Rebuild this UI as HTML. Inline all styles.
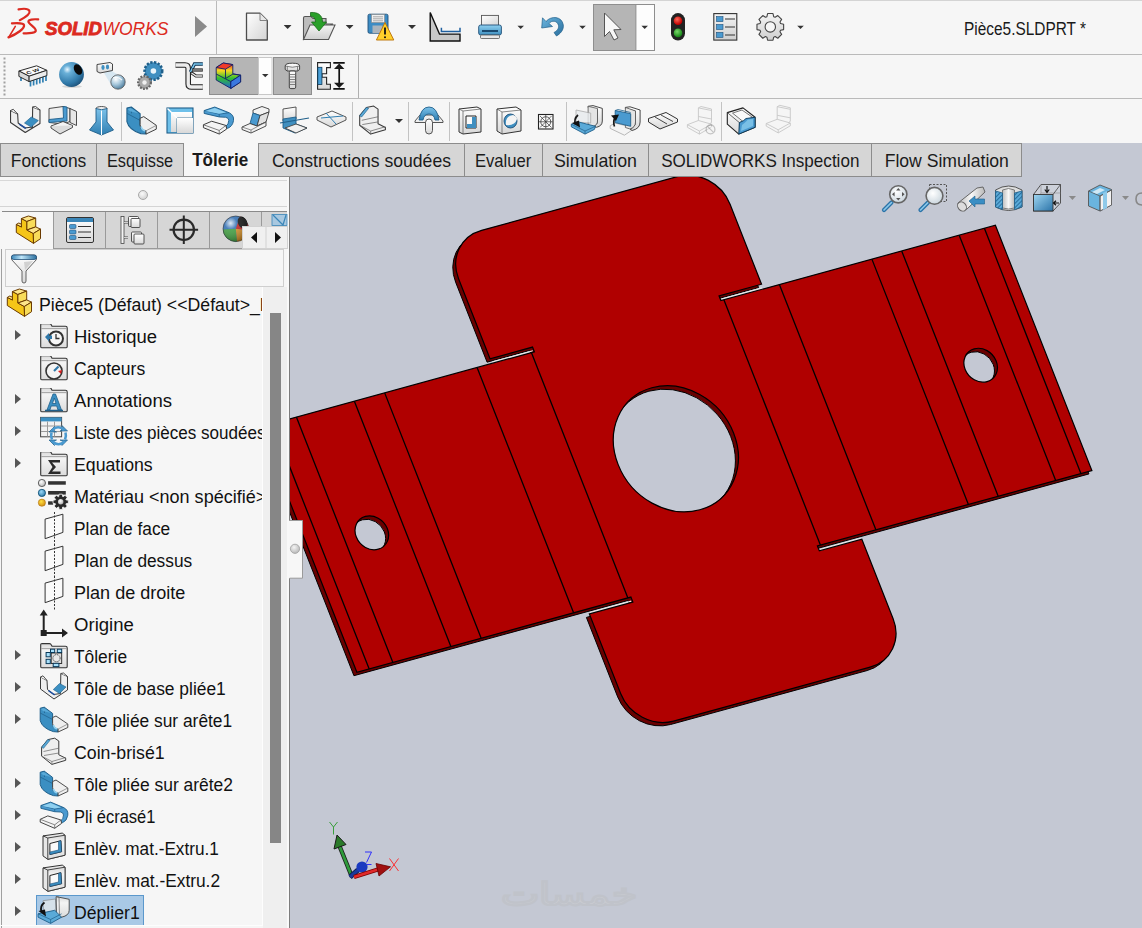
<!DOCTYPE html>
<html><head><meta charset="utf-8">
<style>
*{margin:0;padding:0;box-sizing:border-box}
html,body{width:1142px;height:928px;overflow:hidden;background:#f5f5f5;font-family:"Liberation Sans",sans-serif;color:#111}
.abs{position:absolute}
#tb{position:absolute;left:0;top:0;width:1142px;height:143px;background:#f6f6f6}
.hl{position:absolute;height:1px;background:#bababa}
.vl{position:absolute;width:1px;background:#bababa}
#tabs{position:absolute;left:0;top:143px;width:1142px;height:34px;background:#c4c8d3}
.tab{position:absolute;top:0;height:34px;background:#d6d6d6;border:1px solid #8c8c8c;border-right:none;font-size:17.8px;line-height:35px;text-align:center;color:#1b1b1b}
.tab.act{background:#f6f6f6;border:none;font-weight:bold}
#panel{position:absolute;left:0;top:177px;width:290px;height:751px;background:#f6f6f6}
#vp{position:absolute;left:290px;top:177px;width:852px;height:751px;background:#c4c8d3;overflow:hidden}
.row{position:absolute;left:0;height:32px;width:263px;font-size:18.3px;line-height:33px;white-space:nowrap;color:#111}
.exp{position:absolute;left:15px;top:10px;width:0;height:0;border-top:5.5px solid transparent;border-bottom:5.5px solid transparent;border-left:6px solid #575757}
.ti{position:absolute;left:40px;top:4px;width:28px;height:26px;overflow:visible}
.tt{position:absolute;left:74px;top:0;transform-origin:0 0}
</style></head><body>
<svg width="0" height="0" style="position:absolute">
<defs>
<linearGradient id="gFold" x1="0" y1="0" x2="0" y2="1"><stop offset="0" stop-color="#d9d9d9"/><stop offset="0.3" stop-color="#f4f4f4"/><stop offset="1" stop-color="#dcdcdc"/></linearGradient>
<linearGradient id="gBlue" x1="0" y1="0" x2="1" y2="1"><stop offset="0" stop-color="#7fc0e6"/><stop offset="1" stop-color="#2f7fb0"/></linearGradient>
<symbol id="folder" viewBox="0 0 28 26" overflow="visible"><path d="M0.7 4 V1 Q0.7 -0.4 2.1 -0.4 H9.5 Q10.8 -0.4 11.4 1 L12 2.2 H25.5 Q27.2 2.2 27.2 4 V22.4 Q27.2 23.8 25.8 23.8 H2.1 Q0.7 23.8 0.7 22.4 Z" fill="url(#gFold)" stroke="#333" stroke-width="1.1"/><path d="M1.2 4.6 H26.7" stroke="#9a9a9a" stroke-width="0.9"/></symbol>
<symbol id="i-hist" viewBox="0 0 28 26"><use href="#folder"/><circle cx="16" cy="14.5" r="7" fill="#f6f6f6" stroke="#333" stroke-width="2"/><path d="M16 10v4.5h3.5" stroke="#333" stroke-width="1.3" fill="none"/><path d="M5 13 l4 -4 v2.5 h3 v3.5 h-3 v2.5z" fill="#2f77a8"/></symbol>
<symbol id="i-capt" viewBox="0 0 28 26"><use href="#folder"/><circle cx="14" cy="15" r="8" fill="#f4f4f4" stroke="#333" stroke-width="1.6"/><path d="M14 15 l4.5 -4.5" stroke="#2f77a8" stroke-width="2.2"/><path d="M18 15 l4 -1 l-1 4z" fill="#e02020"/></symbol>
<symbol id="i-annot" viewBox="0 0 28 26"><use href="#folder"/><path d="M7 22 L13 6 h2.5 L21.5 22 h-3.5 l-1.3 -4 h-5.5 l-1.3 4z M12.5 15.5 h3.5 l-1.7 -5.5z" fill="#3b8fc2" stroke="#1f5f8a" stroke-width="0.8"/><path d="M5 22.5h18" stroke="#1f5f8a" stroke-width="1.5"/></symbol>
<symbol id="i-liste" viewBox="0 0 28 26" overflow="visible"><rect x="0.6" y="-2.6" width="21" height="19.4" fill="#f2f2f2" stroke="#444" stroke-width="1"/><rect x="0.6" y="-2.6" width="21" height="4" fill="#3b8fc2"/><path d="M1 6h20.5M1 11.5h20.5M7.5 1.5v15M14.5 1.5v15" stroke="#9a9a9a" stroke-width="1"/>
<g fill="#4a9ad0" stroke="#1f5f8a" stroke-width="0.7" stroke-linejoin="round"><path d="M9 12 L14.5 6.5 L13 10.5 L16.5 12 Z"/><path d="M27.5 12 L22 6.5 L23.5 10.5 L20 12 Z" transform="translate(0 -1)"/><path d="M27.5 20 L22 25.5 L23.5 21.5 L20 20 Z"/><path d="M9 20 L14.5 25.5 L13 21.5 L16.5 20 Z"/></g>
<path d="M12.5 10 Q18 4.5 24 10 M24.5 21.5 Q18.5 27 12.5 21.5" fill="none" stroke="#4a9ad0" stroke-width="2.6"/><path d="M11.5 12.5 Q10.5 16 12 19.5 M25.5 12.5 Q26.5 16 25 19.5" fill="none" stroke="#4a9ad0" stroke-width="2.6"/></symbol>
<symbol id="i-equ" viewBox="0 0 28 26"><use href="#folder"/><path d="M8 8 H20 V10.5 H12 L16 15 L12 19.5 H20.5 V22 H8 L12.5 15 Z" fill="#2a2a2a"/></symbol>
<symbol id="i-mat" viewBox="0 0 28 26" overflow="visible"><defs><radialGradient id="gMg" cx="0.4" cy="0.35" r="0.7"><stop offset="0" stop-color="#ffffff"/><stop offset="1" stop-color="#b0b0b0"/></radialGradient><radialGradient id="gMb" cx="0.4" cy="0.35" r="0.7"><stop offset="0" stop-color="#9ad8f8"/><stop offset="1" stop-color="#2a78a8"/></radialGradient><radialGradient id="gMy" cx="0.4" cy="0.35" r="0.7"><stop offset="0" stop-color="#ffe040"/><stop offset="1" stop-color="#d08a10"/></radialGradient></defs>
<circle cx="1.9" cy="-1" r="3.6" fill="url(#gMg)" stroke="#444" stroke-width="0.8"/><rect x="8.1" y="-2.8" width="17.7" height="3.5" fill="#333"/>
<circle cx="1.9" cy="8.9" r="3.6" fill="url(#gMb)" stroke="#0a4a70" stroke-width="0.8"/><rect x="8.1" y="7" width="17.7" height="3.6" fill="#333"/>
<circle cx="1.9" cy="18.7" r="3.6" fill="url(#gMy)" stroke="#b07010" stroke-width="0.6"/><rect x="8.1" y="17.3" width="5" height="3.4" fill="#333"/>
<path d="M18.73,12.56 L19.15,10.16 L22.25,10.16 L22.67,12.56 L23.01,12.70 L25.01,11.30 L27.20,13.49 L25.80,15.49 L25.94,15.83 L28.34,16.25 L28.34,19.35 L25.94,19.77 L25.80,20.11 L27.20,22.11 L25.01,24.30 L23.01,22.90 L22.67,23.04 L22.25,25.44 L19.15,25.44 L18.73,23.04 L18.39,22.90 L16.39,24.30 L14.20,22.11 L15.60,20.11 L15.46,19.77 L13.06,19.35 L13.06,16.25 L15.46,15.83 L15.60,15.49 L14.20,13.49 L16.39,11.30 L18.39,12.70Z" fill="#2a2a2a" stroke="#f6f6f6" stroke-width="0.8"/><circle cx="20.7" cy="17.8" r="2.7" fill="url(#gMg)"/></symbol>
<symbol id="i-plan" viewBox="0 0 28 26" overflow="visible"><path d="M5.1 3.1 L22.9 -1.8 V16.4 L5.1 22.7 Z" fill="#fafafa" stroke="#333" stroke-width="1"/><path d="M14.5 -4 V30" stroke="#333" stroke-width="1" stroke-dasharray="2 1.5"/></symbol>
<symbol id="i-orig" viewBox="0 0 28 26" overflow="visible"><path d="M3.7 2 V21 H23" fill="none" stroke="#222" stroke-width="2"/><path d="M-0.3 3.5 L3.7 -2.6 L7.7 3.5Z M22 16.5 L28 21 L22 25.5Z" fill="#222"/><rect x="0.7" y="18" width="6" height="6" fill="#222"/></symbol>
<symbol id="i-tole" viewBox="0 0 28 26" overflow="visible"><use href="#folder"/><rect x="11.2" y="9" width="10.5" height="10.5" fill="#e0e0e0" stroke="#222" stroke-width="0.9"/><circle cx="16.5" cy="14.2" r="3.6" fill="#e8e8e8" stroke="#333" stroke-width="0.9" stroke-dasharray="1.3 0.8"/><g fill="#a8e0fa" stroke="#0a3a5a" stroke-width="1"><rect x="10.5" y="5.2" width="4.2" height="3.3"/><rect x="17.3" y="5.2" width="4.4" height="3.3"/><rect x="6.1" y="8.5" width="4.2" height="4.3"/><rect x="6.1" y="15.3" width="4.2" height="4.3"/><rect x="13.2" y="19.3" width="5.7" height="3.3"/></g></symbol>
<symbol id="i-base" viewBox="0 0 28 26" overflow="visible"><path d="M0.5 1 L7 4.5 L7.5 13.5 L13.5 18.5 L20.5 17.5 L20.8 -2.5 L27.5 0.5 L27.5 14 L14 23 L0.5 13 Z" fill="#efefef" stroke="#3a3a3a" stroke-width="1" stroke-linejoin="round"/><path d="M0.5 1 L3 -0.2 L7 4.5 M20.8 -2.5 L23.5 -3 L27.5 0.5" fill="#f8f8f8" stroke="#3a3a3a" stroke-width="0.9"/><path d="M13.3 13.5 L19.5 7.5 L26 11 L19.5 17.5 Z" fill="#3b8fc2" stroke="#1f5f8a" stroke-width="0.6"/><path d="M8.5 14.6 L14.7 18.8" stroke="#1f4fa0" stroke-width="1.4"/></symbol>
<symbol id="i-arete" viewBox="0 0 28 26" overflow="visible"><path d="M0.2 0.2 L4.3 -0.8 L12.6 5.4 V15.5 Q12.6 19.5 16 20.5 L18.1 21 V24 L13.3 23.6 Q2 20 0.2 12.5 Z" fill="#3b8fc2" stroke="#1f5f8a" stroke-width="1" stroke-linejoin="round"/><path d="M0.2 5 L12.6 11.5 M4.3 -0.8 L4.5 5" stroke="#1f5f8a" stroke-width="0.7" fill="none"/><path d="M1 1 L4 0 L11 5 L3 3Z" fill="#5aaad8"/><path d="M12.6 9.5 L16 8 L27.8 16 V19.5 L18.1 24 V21 L16 20.5 Q12.6 19.5 12.6 15.5 Z" fill="#efefef" stroke="#3a3a3a" stroke-width="0.9" stroke-linejoin="round"/><path d="M18.1 21 L27.8 16" stroke="#777" stroke-width="0.7"/><path d="M13.5 17 Q14 20.5 17.5 21" fill="none" stroke="#8fd0f0" stroke-width="1.6"/></symbol>
<symbol id="i-coin" viewBox="0 0 28 26" overflow="visible"><path d="M1.6 7.2 L7.8 -0.4 L14.7 -1.8 L18.8 1 V14.8 L25.7 18.2 V20.3 L11.9 24.4 L1.6 16.1 Z" fill="#efefef" stroke="#3a3a3a" stroke-width="1" stroke-linejoin="round"/><path d="M1.6 7.2 L7.8 -0.4 L10 0.3 L3.5 8.3 Z" fill="#5aaad8" stroke="#1f5f8a" stroke-width="0.6"/><path d="M3.5 11.5 L18.8 8.2 M4 15.5 L18.8 13 M11.9 21.5 L25.7 17.5 M11.9 21.5 V24.4 M1.6 16.1 L11.9 21.5" fill="none" stroke="#666" stroke-width="0.7"/></symbol>
<symbol id="i-ecrase" viewBox="0 0 28 26" overflow="visible"><path d="M0.9 1.5 L10.6 -1.9 L23.7 3.6 Q28.5 6 27.8 11.2 Q27 17 22.3 18.8 L20.5 17 Q23.5 15 23.5 11 Q23.5 8.5 20.5 8 L14.7 7.7 L0.9 4.3 Z" fill="#4a9ad0" stroke="#1f5f8a" stroke-width="0.9" stroke-linejoin="round"/><path d="M0.9 1.5 L14.7 5 L23.7 3.6 M14.7 5 V7.7" fill="none" stroke="#1f5f8a" stroke-width="0.7"/><path d="M2 2 L10.6 -1 L21 3.5 L14.5 4.5Z" fill="#8fd0f0"/><path d="M0.2 15.3 L7.8 11.9 L20.9 16 L21.6 19.4 L14.7 24.3 L0.2 18.1 Z" fill="#f4f4f4" stroke="#333" stroke-width="0.9" stroke-linejoin="round"/><path d="M0.2 15.3 L14.7 20.8 L20.9 16 M14.7 20.8 V24.3" fill="none" stroke="#555" stroke-width="0.7"/></symbol>
<symbol id="i-enlev" viewBox="0 0 28 26" overflow="visible"><path d="M3 -0.1 L22.3 -2.9 L25 -0.8 V19.2 L7.8 23.3 L3 19.9 Z" fill="#e6e6e6" stroke="#333" stroke-width="1" stroke-linejoin="round"/><path d="M7.8 2 L25 -0.8 V19.2 L7.8 23.3 Z" fill="url(#gFold)" stroke="#333" stroke-width="0.9"/><path d="M3 -0.1 L7.8 2" stroke="#333" stroke-width="0.9"/><path d="M9.9 7.5 L20.9 4.7 L21.6 15.7 L9.9 18.5 Z" fill="#fafafa" stroke="#222" stroke-width="1"/><path d="M18.5 5.3 L20.9 4.7 L21.6 15.7 L9.9 18.5 V16 L18.5 14 Z" fill="#3b8fc2" stroke="#1f4f78" stroke-width="0.6"/></symbol>
<symbol id="i-deplier" viewBox="0 0 28 26" overflow="visible"><path d="M3 0.7 L15.5 -1 L16 11 L3.5 13.5 Z" fill="#dfe6ea" stroke="#8a8a8a" stroke-width="0.8" opacity="0.85"/><path d="M16.1 -3.4 L29.2 -0.7 V10.3 Q29.2 15.5 21.6 17.2 L16.5 15.5 Z" fill="url(#gFold)" stroke="#444" stroke-width="0.9"/><path d="M16.1 -3.4 L19 -3 L19.5 15.8" fill="none" stroke="#666" stroke-width="0.7"/><path d="M-1.9 13.8 L14.7 10.3 L21.6 17.2 L10.6 23.4 L-1.9 17.2 Z" fill="#5aaad8" stroke="#1f5f8a" stroke-width="0.9" stroke-linejoin="round"/><path d="M-1.9 13.8 L10.6 19.5 L21.6 13.8 M10.6 19.5 V23.4" fill="none" stroke="#1f5f8a" stroke-width="0.7"/><path d="M4.5 2.5 Q-0.5 6 1.5 12" fill="none" stroke="#111" stroke-width="1.8"/><path d="M-1.5 11 L6 16.5 L5 9.5 Z" fill="#111"/></symbol>
<symbol id="i-part" viewBox="0 0 32 34"><g stroke="#6a3a00" stroke-width="1" stroke-linejoin="round">
<path d="M3.3 11.4 L8.4 14 L8.4 5.5 L13.9 8.5 L13.9 17 L20.3 20.5 L20.5 30.4 L3.3 19.5Z" fill="#f5c518"/>
<path d="M3.3 11.4 L5.8 10 L8.4 11.2 L8.4 14Z" fill="#fde58a"/>
<path d="M8.4 5.5 L15.4 3 L22.7 5.1 L13.9 8.5Z" fill="#fde58a"/>
<path d="M13.9 8.5 L22.7 5.1 L22.7 13.9 L13.9 17Z" fill="#f8dc5a"/>
<path d="M13.9 17 L22.7 13.9 L27.5 16.1 L20.3 20.5Z" fill="#fde58a"/>
<path d="M20.3 20.5 L27.5 16.1 L27.5 25.7 L20.5 30.4Z" fill="#f8dc5a"/></g></symbol>
</defs></svg>
<div id="tb">
  <div class="hl" style="left:0;top:0;width:1142px;background:#d4d4d4"></div>
  <div class="hl" style="left:0;top:54px;width:1142px"></div>
  <div class="hl" style="left:0;top:98px;width:1142px"></div>
  <div class="vl" style="left:216px;top:1px;height:53px"></div>
<!--TB1--><svg class="abs" style="left:0;top:0" width="1142" height="143" viewBox="0 0 1142 143">
<defs>
<linearGradient id="gPage" x1="0" y1="0" x2="1" y2="1"><stop offset="0" stop-color="#ffffff"/><stop offset="1" stop-color="#d4d4d4"/></linearGradient>
<linearGradient id="gGray" x1="0" y1="0" x2="0" y2="1"><stop offset="0" stop-color="#f4f4f4"/><stop offset="1" stop-color="#cfcfcf"/></linearGradient>
<linearGradient id="gBl" x1="0" y1="0" x2="0" y2="1"><stop offset="0" stop-color="#8fd0f0"/><stop offset="1" stop-color="#3f8fc0"/></linearGradient>
<linearGradient id="gBlD" x1="0" y1="0" x2="1" y2="1"><stop offset="0" stop-color="#6ab4de"/><stop offset="1" stop-color="#2a6f9e"/></linearGradient>
<radialGradient id="gRed" cx="0.4" cy="0.35" r="0.6"><stop offset="0" stop-color="#ff6a5a"/><stop offset="1" stop-color="#c00000"/></radialGradient>
<radialGradient id="gGrn" cx="0.4" cy="0.35" r="0.6"><stop offset="0" stop-color="#7ad86a"/><stop offset="1" stop-color="#1a8a1a"/></radialGradient>
<symbol id="dd" viewBox="0 0 8 4"><path d="M0 0H8L4 4Z" fill="#333"/></symbol>
</defs>
<!-- logo -->
<g fill="none" stroke="#dc2a21" stroke-linecap="round">
<path d="M18.5 9.4 C23 8.6 28.5 8.8 29.5 11 C30.5 14 25 17.5 19.8 20.2" stroke-width="2.1"/>
<path d="M12 23.4 C16 23 23.5 23 24 25 C24.8 28.5 17 34 8.5 37.4" stroke-width="2.3"/>
<path d="M15.3 26.4 L9 36.8" stroke-width="1.6"/>
<path d="M38.2 19.4 C33 19 28.5 19.5 28.4 21.5 C28.3 24 35.5 27 35.8 30.5 C36 33 29 33.6 23.6 33.3" stroke-width="2.2"/>
</g>
<text x="45" y="35" font-family="Liberation Sans" font-weight="bold" font-style="italic" font-size="19.2" fill="#dc2a21" stroke="#dc2a21" stroke-width="0.9" textLength="57" lengthAdjust="spacingAndGlyphs">SOLID</text>
<text x="102.5" y="35" font-family="Liberation Sans" font-style="italic" font-size="19.2" fill="#dc2a21" textLength="66" lengthAdjust="spacingAndGlyphs">WORKS</text>
<path d="M195 16 L207 26.5 L195 37 Z" fill="#8a8a8a"/>
<!-- new doc -->
<path d="M246.5 13.2 H260 L267.3 20.5 V40 H246.5 Z" fill="url(#gPage)" stroke="#4d4d4d" stroke-width="1.3" stroke-linejoin="round"/>
<path d="M260 13.2 V20.5 H267.3" fill="#e8e8e8" stroke="#777" stroke-width="0.9"/>
<use href="#dd" x="283.6" y="25" width="8" height="4"/>
<!-- open -->
<path d="M303.5 39.5 V18 Q303.5 16.5 305 16.5 H311 L313 18.5 H326 V24 H333 Z" fill="#bdbdbd" stroke="#555" stroke-width="1.1"/>
<path d="M303.5 39.5 L310 25 H335 L328.5 39.5 Z" fill="url(#gGray)" stroke="#555" stroke-width="1.1"/>
<path d="M310.5 12.5 C318 12 322.5 15 322.5 22 H326.5 L319 31 L311.5 22 H315.5 C315.5 18.5 314 16.5 310.5 16 Z" fill="#2aa02a" stroke="#1a6a1a" stroke-width="0.8"/>
<use href="#dd" x="345.6" y="25" width="8" height="4"/>
<!-- save -->
<rect x="368" y="14.2" width="20" height="19" rx="1.5" fill="#3c8cc4" stroke="#1f4f78" stroke-width="0.9"/>
<rect x="371.5" y="14.5" width="13" height="8" fill="#f0f0f0" stroke="#888" stroke-width="0.6"/>
<path d="M373 16.8h10M373 18.8h10M373 20.8h10" stroke="#777" stroke-width="0.6"/>
<rect x="372.5" y="25.5" width="10" height="7.5" fill="#aab4bc"/>
<path d="M385 22.5 L393.8 40 H376.4 Z" fill="#ffd02a" stroke="#c07a10" stroke-width="1" stroke-linejoin="round"/>
<path d="M385 27.5 V34.5" stroke="#111" stroke-width="1.8"/><circle cx="385" cy="37.2" r="1" fill="#111"/>
<use href="#dd" x="408" y="25" width="8" height="4"/>
<!-- drawing -->
<path d="M430.2 12.5 V41 H460 V34.1 H439.5 Z" fill="#c8c8c8" stroke="#111" stroke-width="1.4" stroke-linejoin="miter"/>
<path d="M441.4 27.8 V31.5 H460 V27.8" fill="none" stroke="#1f5f9f" stroke-width="1.5"/>
<!-- printer -->
<rect x="481.5" y="15.4" width="17" height="11" fill="url(#gPage)" stroke="#555" stroke-width="0.9"/>
<rect x="478.7" y="25" width="22.7" height="10" rx="2" fill="url(#gBl)" stroke="#1f4f78" stroke-width="0.9"/>
<rect x="482" y="30" width="16" height="2" fill="#1a4a70"/>
<rect x="480.5" y="35" width="19" height="3.5" rx="1" fill="#e8e8e8" stroke="#555" stroke-width="0.8"/>
<use href="#dd" x="517.2" y="25.4" width="7" height="3.5"/>
<!-- undo -->
<path d="M546 21.5 C551 15.5 562 16 563.3 25 C564 30 560 34 556.5 36 L554 32.5 C557 31 559 28.5 558.5 25.5 C557.5 20.5 551.5 20 549 23.5 L552.5 26.5 L541.7 28 L542.5 17.8 Z" fill="url(#gBlD)" stroke="#1f5f8a" stroke-width="0.7"/>
<use href="#dd" x="579" y="25.4" width="7" height="3.5"/>
<!-- select button -->
<rect x="593.5" y="4.5" width="61" height="46" fill="#fdfdfd" stroke="#8e8e8e" stroke-width="1"/>
<rect x="593.5" y="4.5" width="42.4" height="46" fill="#b5b5b5" stroke="#8e8e8e" stroke-width="1"/>
<path d="M604.5 13 V36.5 L609.5 31.5 L614 40 L618 38 L613.8 29.8 L621 29.5 Z" fill="#f8f8f8" stroke="#555" stroke-width="1" stroke-linejoin="round"/>
<use href="#dd" x="641.2" y="25.4" width="7" height="3.5"/>
<!-- traffic light -->
<rect x="671" y="13.1" width="14" height="27.5" rx="7" fill="#222"/>
<circle cx="678" cy="20.7" r="4.3" fill="url(#gRed)"/>
<circle cx="678" cy="32.9" r="4.3" fill="url(#gGrn)"/>
<!-- list -->
<rect x="713.8" y="13.6" width="23" height="26.5" fill="url(#gGray)" stroke="#333" stroke-width="1.1"/>
<rect x="716.5" y="16.6" width="6.5" height="5" fill="#4a9ad0" stroke="#1f4f78" stroke-width="0.6"/>
<rect x="716.5" y="24.5" width="6.5" height="5" fill="#4a9ad0" stroke="#1f4f78" stroke-width="0.6"/>
<rect x="716.5" y="32.4" width="6.5" height="5" fill="#4a9ad0" stroke="#1f4f78" stroke-width="0.6"/>
<path d="M725 19h10M725 27h10M725 35h10" stroke="#333" stroke-width="1"/>
<!-- gear -->
<path d="M780.55,23.50 L783.63,24.20 L783.63,29.60 L780.55,30.30 L779.95,31.75 L781.64,34.41 L777.81,38.24 L775.15,36.55 L773.70,37.15 L773.00,40.23 L767.60,40.23 L766.90,37.15 L765.45,36.55 L762.79,38.24 L758.96,34.41 L760.65,31.75 L760.05,30.30 L756.97,29.60 L756.97,24.20 L760.05,23.50 L760.65,22.05 L758.96,19.39 L762.79,15.56 L765.45,17.25 L766.90,16.65 L767.60,13.57 L773.00,13.57 L773.70,16.65 L775.15,17.25 L777.81,15.56 L781.64,19.39 L779.95,22.05Z M775.5,26.9 A5.2 5.2 0 1 0 765.0999999999999,26.9 A5.2 5.2 0 1 0 775.5,26.9Z" fill="url(#gGray)" fill-rule="evenodd" stroke="#444" stroke-width="1.1" stroke-linejoin="round"/>
<use href="#dd" x="797" y="25.4" width="7" height="3.5"/>
<text x="964" y="35" font-family="Liberation Sans" font-size="17.6" fill="#1a1a1a" textLength="122" lengthAdjust="spacingAndGlyphs">Pièce5.SLDPRT *</text>
</svg>
<!--/TB1--><!--TB2--><svg class="abs" style="left:0;top:0" width="1142" height="143" viewBox="0 0 1142 143">
<defs>
<linearGradient id="gW" x1="0" y1="0" x2="0" y2="1"><stop offset="0" stop-color="#ffffff"/><stop offset="1" stop-color="#d8d8d8"/></linearGradient>
<linearGradient id="gB2" x1="0" y1="0" x2="0" y2="1"><stop offset="0" stop-color="#7cc2ea"/><stop offset="1" stop-color="#2f7fb2"/></linearGradient>
<radialGradient id="gBall" cx="0.35" cy="0.3" r="0.75"><stop offset="0" stop-color="#cfeeff"/><stop offset="0.35" stop-color="#4c9ccc"/><stop offset="1" stop-color="#1d5a85"/></radialGradient>
<linearGradient id="gRain" x1="0" y1="0" x2="1" y2="1"><stop offset="0" stop-color="#ff2020"/><stop offset="0.3" stop-color="#ffd000"/><stop offset="0.55" stop-color="#30c030"/><stop offset="0.8" stop-color="#20a0ff"/><stop offset="1" stop-color="#2030d0"/></linearGradient>
</defs>
<!-- row 2 grip -->
<g fill="#a0a0a0"><rect x="3.5" y="57.5" width="2" height="2"/><rect x="3.5" y="61.5" width="2" height="2"/><rect x="3.5" y="65.5" width="2" height="2"/><rect x="3.5" y="69.5" width="2" height="2"/><rect x="3.5" y="73.5" width="2" height="2"/><rect x="3.5" y="77.5" width="2" height="2"/><rect x="3.5" y="81.5" width="2" height="2"/><rect x="3.5" y="85.5" width="2" height="2"/><rect x="3.5" y="89.5" width="2" height="2"/><rect x="3.5" y="93.5" width="2" height="2"/></g>
<!-- chip CW -->
<g stroke="#2f7fb2" stroke-width="1.7"><path d="M21 76v5M30.5 80v6.5M33.6 79v6.5M36.7 78v6.5M39.8 77v6.5M42.9 76v6.5M46 75v6"/></g>
<path d="M18.9 71 L36.6 65.8 L46.9 70.3 L29.1 76.2 Z" fill="#fafafa" stroke="#2a2a2a" stroke-width="1"/>
<path d="M18.9 71 L29.1 76.2 V81.6 L18.9 76.4 Z" fill="#d8d8d8" stroke="#2a2a2a" stroke-width="1"/>
<path d="M29.1 76.2 L46.9 70.3 V75.6 L29.1 81.6 Z" fill="#ececec" stroke="#2a2a2a" stroke-width="1"/>
<text x="0" y="0" font-family="Liberation Sans" font-weight="bold" font-size="6.5" fill="#222" transform="matrix(1 -0.3 0.45 0.55 27.5 74.5)">C W</text>
<!-- ball -->
<defs><radialGradient id="gBall2" cx="0.33" cy="0.3" r="0.8"><stop offset="0" stop-color="#e8f6ff"/><stop offset="0.2" stop-color="#6ab0d8"/><stop offset="0.7" stop-color="#2f78a8"/><stop offset="1" stop-color="#1a4a70"/></radialGradient></defs>
<ellipse cx="72" cy="86.5" rx="10" ry="1.5" fill="#999" opacity="0.35"/>
<circle cx="71.5" cy="74.5" r="12.4" fill="url(#gBall2)"/>
<ellipse cx="78" cy="69.5" rx="3.8" ry="5.6" fill="#0a0a0a" transform="rotate(-28 78 69.5)"/>
<!-- camera -->
<path d="M110 70 L124 78 L113 88 L104 73Z" fill="#cfe4f0" opacity="0.8"/>
<path d="M97 64.5 L110 62.5 L112.5 64 V70.5 L100 73 L97 71.5Z" fill="url(#gW)" stroke="#333" stroke-width="0.9"/>
<ellipse cx="103" cy="67.5" rx="1.6" ry="2.4" fill="#3f8fc0"/><ellipse cx="107.5" cy="67" rx="1.6" ry="2.4" fill="#3f8fc0"/>
<defs><radialGradient id="gLensS" cx="0.35" cy="0.3" r="0.75"><stop offset="0" stop-color="#ffffff"/><stop offset="0.5" stop-color="#a8c8dc"/><stop offset="1" stop-color="#4a7a9a"/></radialGradient></defs><circle cx="118" cy="82" r="7.2" fill="url(#gLensS)" stroke="#555" stroke-width="0.8"/><path d="M113 78 Q118 76 122 80" fill="none" stroke="#fff" stroke-width="1.2" opacity="0.8"/>
<!-- gears -->
<g transform="translate(153.4 71)"><circle r="8.8" fill="#3f8fc0" stroke="#1f5f8a" stroke-width="2.6" stroke-dasharray="2.3 1.5"/><circle r="7" fill="#3f8fc0"/><circle r="2.8" fill="#e8f4fa"/></g>
<g transform="translate(144.5 82.5)"><circle r="6.3" fill="#999" stroke="#666" stroke-width="2.4" stroke-dasharray="1.8 1.3"/><circle r="5" fill="#aaa"/><circle r="2.2" fill="#f0f0f0"/></g>
<!-- pipe route -->
<defs><linearGradient id="gPipe" x1="0" y1="0" x2="0" y2="1"><stop offset="0" stop-color="#ffffff"/><stop offset="1" stop-color="#b8b8b8"/></linearGradient></defs>
<path d="M175.5 65 H185 Q188.2 65 188.2 68.5 V84 Q188.2 87 191.5 87 H202.8" fill="none" stroke="#222" stroke-width="5.6" stroke-linejoin="round"/>
<path d="M175.5 65 H185 Q188.2 65 188.2 68.5 V84 Q188.2 87 191.5 87 H202.8" fill="none" stroke="#ececec" stroke-width="3.4" stroke-linejoin="round"/>
<path d="M190.5 72 L194.5 64 H202.8" fill="none" stroke="#0a3050" stroke-width="3.4"/>
<path d="M190.5 72 L194.5 64 H202.8" fill="none" stroke="#7cc8ee" stroke-width="1.6"/>
<path d="M192 70 H202.8" fill="none" stroke="#222" stroke-width="3.2"/><path d="M192.5 70 H202.3" fill="none" stroke="#9a9a9a" stroke-width="1.4"/>
<path d="M191 72.5 L196 76 H202.8" fill="none" stroke="#222" stroke-width="3.2"/><path d="M191.5 73 L196 76 H202.3" fill="none" stroke="#e8e8e8" stroke-width="1.4"/>
<!-- pressed btn 1 -->
<rect x="209.5" y="57.5" width="49" height="37" fill="#b5b5b5" stroke="#8e8e8e"/>
<rect x="258.5" y="57.5" width="13.5" height="37" fill="#fdfdfd" stroke="#c8c8c8"/>
<path d="M262 74 H268.5 L265.25 77.2Z" fill="#333"/>
<linearGradient id="gRainV" x1="0" y1="0" x2="0" y2="1"><stop offset="0" stop-color="#e82020"/><stop offset="0.3" stop-color="#f8d820"/><stop offset="0.6" stop-color="#30c030"/><stop offset="1" stop-color="#2060d8"/></linearGradient>
<g stroke="#12206a" stroke-width="0.9" stroke-linejoin="round">
<path d="M216.2 67.5 L223.2 63 L232.8 64.6 L232.8 73.8 L240.6 75.2 L240.6 82 L230.8 88.4 L216.2 80 Z" fill="url(#gRainV)"/>
<path d="M216.2 67.5 L223.2 63 L232.8 64.6 L225.5 69.2 Z" fill="#f03a2a"/>
<path d="M225.5 69.2 V78.5 L233 74 L240.6 75.2 L230.8 81.6 L216.2 74" fill="none"/>
<path d="M230.8 81.6 V88.4" fill="none"/>
<path d="M230.8 81.6 L240.6 75.2 V82 L230.8 88.4Z" fill="#3a78e0"/>
</g>
<!-- pressed btn 2 bolt -->
<rect x="273.5" y="57.5" width="38" height="37" fill="#b5b5b5" stroke="#8e8e8e"/>
<path d="M285.2 66 Q285.2 63.2 292.4 63.2 Q299.6 63.2 299.6 66 V69.5 L297.5 71 H287.3 L285.2 69.5 Z" fill="url(#gW)" stroke="#333" stroke-width="0.9"/>
<path d="M287.3 66.5 V71 M297.5 66.5 V71 M285.2 66 Q292.4 68.5 299.6 66" fill="none" stroke="#555" stroke-width="0.7"/>
<rect x="289.3" y="71" width="6.4" height="17.6" rx="1.5" fill="url(#gW)" stroke="#333" stroke-width="0.9"/>
<path d="M290 74.5h5M290 77h5M290 79.5h5M290 82h5M290 84.5h5" stroke="#666" stroke-width="0.8"/>
<!-- dimension icon -->
<path d="M317.6 62.6 H330.4 V67.6 H326.6 V73.8 H322 V77.3 H326.6 V84.2 H330.4 V89.2 H317.6 Z" fill="url(#gW)" stroke="#222" stroke-width="1.1"/>
<rect x="317.8" y="67.3" width="4.1" height="17.2" fill="#4aa0d8" stroke="#0a3a5a" stroke-width="0.8"/>
<path d="M333.3 62.8h11.4M333.3 88.8h11.4M339.2 66v19.5" stroke="#111" stroke-width="1.7"/>
<path d="M334 69 L339.2 63.5 L344.4 69Z M334 82.8 L339.2 88 L344.4 82.8Z" fill="#1a1a1a"/>
<rect x="358" y="55" width="1" height="43" fill="#b0b0b0"/>

<!-- ROW 3 -->
<!-- 1 U bend -->
<g transform="translate(10 109.5) scale(1.09 1.0)"><use href="#i-base" width="28" height="26"/></g>
<!-- 2 -->
<g stroke="#3a3a3a" stroke-width="0.9" stroke-linejoin="round">
<path d="M49 108.5 L63 106.5 L70 108.5 V121.5 L63 124 L49 122.5 Z" fill="#efefef"/>
<path d="M63 106.5 L67 107 V121 L49 122.5 V119.5 L63.5 118 Z" fill="#4a9ad0" stroke="#1f5f8a"/>
<path d="M70 108.5 L76.5 111.5 V125.5 L70 122.5 Z" fill="#e6e6e6"/>
<path d="M51 126 L63 121.5 L72.5 125.5 L60 132 Z" fill="#f4f4f4"/>
<path d="M51 126 V128 L60 134 L72.5 127.5 V125.5" fill="#dcdcdc"/>
</g>
<!-- 3 loft -->
<ellipse cx="101.5" cy="108.5" rx="5.5" ry="2" fill="#eee" stroke="#444" stroke-width="0.9"/>
<path d="M96 108.5 V122 L89.5 130 L101.5 135 L113.5 130 L107 122 V108.5 Q101.5 111 96 108.5Z" fill="url(#gB2)" stroke="#1f5f8a" stroke-width="0.9"/>
<path d="M101.5 110.5 V135" stroke="#fff" stroke-width="1"/>
<rect x="121" y="102" width="1" height="39" fill="#c3c3c3"/>
<!-- 4 edge flange -->
<g transform="translate(126.7 107.9) scale(1.065 1.09)"><use href="#i-arete" width="28" height="26"/></g>
<!-- 5 miter square -->
<rect x="167" y="108" width="26" height="25" fill="#6ec0ea" stroke="#1f5f8a" stroke-width="1.1"/>
<path d="M171 112 H192 V132 H171Z" fill="url(#gW)"/>
<path d="M167 108 L177 118 M177 118 H192 M177 118 V132" stroke="#1f5f8a" stroke-width="0.8" fill="none"/>
<path d="M177 118 H193 V133 H177Z" fill="url(#gW)"/>
<path d="M167.5 108.5 L177 118" stroke="#fff" stroke-width="1.2"/>
<!-- 6 hem -->
<g transform="translate(203.2 109) scale(1.09 1.03)"><use href="#i-ecrase" width="28" height="26"/></g>
<!-- 7 jog -->
<g stroke="#3a3a3a" stroke-width="0.9" stroke-linejoin="round">
<path d="M253 110 L262 106.5 L269 109 L269 112 L260 115.5 L253 113 Z" fill="#f2f2f2"/>
<path d="M253 113 L260 115.5 L257 126 L250 123.5 Z" fill="#4a9ad0" stroke="#1f5f8a"/>
<path d="M260 115.5 L269 112 L266 122 L257 126Z" fill="#e0e0e0"/>
<path d="M242 127 L250 123.5 L257 126 L266 122 L266 126 L251 133 L242 129.5 Z" fill="#f2f2f2"/>
<path d="M242 127 L251 130 L266 122 M251 130 V133" fill="none" stroke="#666" stroke-width="0.7"/>
</g>
<!-- 8 sketched bend -->
<path d="M283 109 L296 107 V119 L283 121Z" fill="url(#gW)" stroke="#444" stroke-width="0.9"/>
<path d="M283 119 L296 117 V124 L307 128 L295 133 L283 128Z" fill="#3f8fc0" stroke="#1f5f8a" stroke-width="0.9"/>
<path d="M285 128 L296 124 L307 128 L296 133Z" fill="#f0f0f0" stroke="#444" stroke-width="0.9"/>
<path d="M280 123 L309 118" stroke="#1f5f8a" stroke-width="1.2"/>
<!-- 9 cross break -->
<path d="M317 117 L332 111 L346 117 V120 L331 127 L317 120Z" fill="url(#gW)" stroke="#444" stroke-width="0.9"/>
<path d="M321 118 L343 116 M326 113 L336 124" stroke="#2f7fb2" stroke-width="1"/>
<rect x="352" y="102" width="1" height="39" fill="#c3c3c3"/>
<!-- 10 corner -->
<g transform="translate(358 108) scale(1.066 1.07)"><use href="#i-coin" width="28" height="26"/></g>
<path d="M395 119 H403 L399 123Z" fill="#333"/>
<rect x="408" y="102" width="1" height="39" fill="#c3c3c3"/>
<!-- 11 forming tool -->
<path d="M415 121 L420 115 H438 L443 121 V122.5 H415Z" fill="#eee" stroke="#444" stroke-width="0.9"/>
<path d="M419 120 Q421 107 429 107 Q437 107 439 120 L435 120 Q434 114 429 114 Q424 114 423 120Z" fill="url(#gB2)" stroke="#1f5f8a" stroke-width="0.9"/>
<rect x="425.5" y="119" width="7" height="15" rx="3.5" fill="url(#gW)" stroke="#444" stroke-width="0.9"/>
<rect x="449" y="102" width="1" height="39" fill="#c3c3c3"/>
<!-- 12 cut square -->
<path d="M459 109 L477 107 L481 109 V132 L463 134 L459 132Z" fill="url(#gW)" stroke="#333" stroke-width="1"/>
<path d="M459 109 L463 111 L481 109 M463 111 V134" fill="none" stroke="#555" stroke-width="0.7"/>
<path d="M466 116 H476 V128 H466Z" fill="#fafafa" stroke="#222" stroke-width="1"/>
<path d="M472 117 H476 V128 H467 V124 H472Z" fill="#3f8fc0"/>
<!-- 13 cut round -->
<path d="M497 109 L516 107 L521 110 V131 L502 134 L497 131Z" fill="url(#gW)" stroke="#333" stroke-width="1"/>
<path d="M497 109 L502 112 L521 110 M502 112 V134" fill="none" stroke="#555" stroke-width="0.7"/>
<ellipse cx="510.5" cy="121" rx="6.5" ry="7" fill="#3f8fc0" stroke="#1f4f78" stroke-width="0.9"/>
<path d="M506 125 Q505 116 513 115 Q517 116 517 119 Q515 126 506 125Z" fill="#f4f4f4"/>
<!-- 14 vent -->
<rect x="538.5" y="114.5" width="14.5" height="14.5" fill="#fafafa" stroke="#222" stroke-width="1.1"/>
<circle cx="545.75" cy="121.75" r="5" fill="none" stroke="#333" stroke-width="0.8"/>
<path d="M540 116l11.5 11.5M551.5 116L540 127.5M545.75 115v13.5M539 121.75h13.5" stroke="#333" stroke-width="0.7"/>
<rect x="566" y="102" width="1" height="39" fill="#c3c3c3"/>
<!-- 15 unfold -->
<g stroke-linejoin="round">
<path d="M588.1 106.3 L593 105.6 L602.3 108.4 V121 Q602.3 126 596.5 127.3 L593 126.5 Q597.5 125 597.5 121 V109.5 L588.1 107.5 Z" fill="url(#gW)" stroke="#333" stroke-width="0.9"/>
<path d="M588.1 106.3 L597.5 108.5 V121 Q597.5 125 593 126.5 L588.1 125 Z" fill="#e4e4e4" stroke="#555" stroke-width="0.8"/>
<path d="M576 110 L590.7 113.1 V123.1 L576 122 Z" fill="#e8ecee" stroke="#9a9a9a" stroke-width="0.8" opacity="0.8"/>
<path d="M571.3 124.2 L578.7 122 L595.5 126.3 L594.4 129.4 L585 134.1 L571.3 126.8 Z" fill="#5aaad8" stroke="#1f5f8a" stroke-width="0.9"/>
<path d="M571.3 124.2 L585 131 L595.5 126.3 M585 131 V134.1" fill="none" stroke="#1f5f8a" stroke-width="0.7"/>
<path d="M578 115 Q573.5 119 575.5 124.5" fill="none" stroke="#1a1a1a" stroke-width="1.7"/>
<path d="M572 123 L580 127.5 L579 120.5 Z" fill="#111"/>
</g>
<!-- 16 fold -->
<g stroke-linejoin="round">
<path d="M610.2 125.7 L615.4 123.1 L632.2 127.3 V130 L624.4 135.2 L610.2 128.4 Z" fill="#f4f4f4" stroke="#a8a8a8" stroke-width="0.8"/>
<path d="M625.4 107.4 L630 106.8 L640.1 110 V122 Q640.1 128.5 632.2 130.5 L630 129 Q635.5 127 635.5 122 V111 L625.4 108.6 Z" fill="url(#gW)" stroke="#333" stroke-width="0.9"/>
<path d="M625.4 107.4 L635.5 111 V122 Q635.5 127 630 129 L625.4 127.5 Z" fill="#e4e4e4" stroke="#555" stroke-width="0.8"/>
<path d="M615.2 110.5 L630.7 113.7 V126.3 L615.2 122.6 Z" fill="#4a9ad0" stroke="#1f5f8a" stroke-width="0.9"/>
<path d="M615.2 110.5 L618 109.5 L630.7 112.5" fill="none" stroke="#1f5f8a" stroke-width="0.8"/>
<path d="M614.5 126.5 Q612.5 121 615.5 117" fill="none" stroke="#1a1a1a" stroke-width="1.7"/>
<path d="M611 115.5 L619 114.5 L616 121 Z" fill="#111"/>
</g>
<!-- 17 flatten -->
<path d="M648.5 118.5 L666 112.5 L677.5 119 V122 L660 129 L648.5 122Z" fill="url(#gW)" stroke="#333" stroke-width="1"/>
<path d="M655 117 L667 124 M661 115 L673 121.5" stroke="#333" stroke-width="0.9"/>
<!-- 18 disabled -->
<g transform="translate(0 0)" opacity="0.32" stroke="#666" stroke-width="0.9" stroke-linejoin="round" fill="#f4f4f4">
<path d="M698.4 107.9 L701 106.5 L711.5 109 V122.6 L706 126 L698.4 121.5 Z"/>
<path d="M698.4 107.9 L711.5 110.5 M698.4 116.5 L711.5 119" fill="none"/>
<path d="M687.4 124.7 L698.4 120.5 L711.5 124.2 V127 L699.4 134.1 L687.4 127.3 Z"/>
<path d="M687.4 124.7 L699.4 131 L711.5 124.2 M699.4 131 V134.1" fill="none"/></g><g opacity="0.35"><circle cx="710.5" cy="129.4" r="4.4" fill="#f4f4f4" stroke="#666" stroke-width="1.3"/><path d="M707.5 126.4 L713.5 132.4" stroke="#666" stroke-width="1.3"/></g>
<rect x="721" y="102" width="1" height="39" fill="#c3c3c3"/>
<!-- 19 shell box -->
<g stroke-linejoin="round">
<path d="M727.3 112.6 L743 107.9 L755.1 117.3 V127.3 L738.8 134.1 L727.3 124.2 Z" fill="url(#gW)" stroke="#222" stroke-width="1.1"/>
<path d="M727.3 112.6 L739.4 122.6 L755.1 117.3 M739.4 122.6 V134" fill="none" stroke="#444" stroke-width="0.8"/>
<path d="M732.5 113.1 L742 110 L752.5 117.3 L743 121.5 Z" fill="#fafafa" stroke="#555" stroke-width="0.8"/>
<path d="M739.4 122.6 Q744 121 746 118.5 L755.1 117.3 V127.3 L738.8 134.1 Z" fill="#4a9ad0" stroke="#0a3a5a" stroke-width="0.9"/>
<path d="M742 125 Q746 122 748 119.5 L753 119 V126 L741 131Z" fill="#8fd0f0" opacity="0.7"/>
</g>
<!-- 20 disabled -->
<g transform="translate(78.8 -1.2)" opacity="0.32" stroke="#666" stroke-width="0.9" stroke-linejoin="round" fill="#f4f4f4">
<path d="M698.4 107.9 L701 106.5 L711.5 109 V122.6 L706 126 L698.4 121.5 Z"/>
<path d="M698.4 107.9 L711.5 110.5 M698.4 116.5 L711.5 119" fill="none"/>
<path d="M687.4 124.7 L698.4 120.5 L711.5 124.2 V127 L699.4 134.1 L687.4 127.3 Z"/>
<path d="M687.4 124.7 L699.4 131 L711.5 124.2 M699.4 131 V134.1" fill="none"/></g>
</svg>
<!--/TB2-->
</div>
<div id="tabs">
  <div class="tab" style="left:0;width:96px"><span style="display:inline-block;transform:scaleX(0.98)">Fonctions</span></div>
  <div class="tab" style="left:96px;width:87px"><span style="display:inline-block;transform:scaleX(0.917)">Esquisse</span></div>
  <div class="tab act" style="left:183px;width:75px"><span style="display:inline-block;transform:scaleX(0.96)">Tôlerie</span></div>
  <div style="position:absolute;left:183px;top:0;width:1px;height:34px;background:#8c8c8c"></div><div style="position:absolute;left:183px;top:33px;width:76px;height:1px;background:#8c8c8c"></div><div class="tab" style="left:258px;width:206px"><span style="display:inline-block;transform:scaleX(0.99)">Constructions soudées</span></div>
  <div class="tab" style="left:464px;width:78px"><span style="display:inline-block;transform:scaleX(0.935)">Evaluer</span></div>
  <div class="tab" style="left:542px;width:106px"><span style="display:inline-block;transform:scaleX(1.0)">Simulation</span></div>
  <div class="tab" style="left:648px;width:223px"><span style="display:inline-block;transform:scaleX(0.96)">SOLIDWORKS Inspection</span></div>
  <div class="tab" style="left:871px;width:151px;border-right:1px solid #8c8c8c"><span style="display:inline-block;transform:scaleX(0.99)">Flow Simulation</span></div>
</div>
<div id="panel">
  <div class="hl" style="left:0;top:3px;width:287px;background:#d8d8d8"></div>
  <div style="position:absolute;left:138px;top:13px;width:10px;height:10px;border-radius:50%;background:radial-gradient(circle at 40% 35%,#fafafa,#c8c8c8);border:1px solid #a8a8a8"></div>
  <div class="hl" style="left:0;top:29px;width:287px;background:#d4d4d4"></div>
  <div class="hl" style="left:2px;top:34px;width:285px;background:#8a8a8a"></div>
  <div style="position:absolute;left:0;top:35px;width:287px;height:37px;background:#d6d6d6"></div>
  <div style="position:absolute;left:0;top:35px;width:53px;height:37px;background:#f6f6f6"></div>
  <div class="vl" style="left:53px;top:35px;height:37px;background:#9a9a9a"></div>
  <div class="vl" style="left:105px;top:35px;height:37px;background:#9a9a9a"></div>
  <div class="vl" style="left:157px;top:35px;height:37px;background:#9a9a9a"></div>
  <div class="vl" style="left:209px;top:35px;height:37px;background:#9a9a9a"></div>
  <div class="vl" style="left:261px;top:35px;height:37px;background:#9a9a9a"></div>
  <div class="hl" style="left:54px;top:71px;width:233px;background:#9a9a9a"></div>
  <svg class="abs" style="left:13px;top:36px" width="32" height="34" viewBox="0 0 32 34"><use href="#i-part"/></svg>
  <div class="vl" style="left:1px;top:72px;height:679px;background:#a0a0a0"></div>
  <div style="position:absolute;left:5px;top:72px;width:279px;height:38px;border:1px solid #cfcfcf;background:#f6f6f6"></div>
  <div style="position:absolute;left:263px;top:110px;width:25px;height:641px;background:#efefef"></div>
  <div style="position:absolute;left:270px;top:136px;width:11px;height:530px;background:#868686"></div>
  <div class="vl" style="left:287px;top:0;height:751px;width:2px;background:#f9f9f9"></div><div class="vl" style="left:262px;top:110px;height:638px;background:#fdfdfd"></div><div class="hl" style="left:0;top:748px;width:263px;background:#fdfdfd"></div><div class="vl" style="left:289px;top:0;height:751px;width:1px;background:#7d7d7d"></div>
</div>
<!--PI--><svg class="abs" style="left:0;top:0" width="290" height="300" viewBox="0 0 290 300">
<defs>
<linearGradient id="gW3" x1="0" y1="0" x2="0" y2="1"><stop offset="0" stop-color="#ffffff"/><stop offset="1" stop-color="#d8d8d8"/></linearGradient>
<linearGradient id="gFun" x1="0" y1="0" x2="1" y2="0"><stop offset="0" stop-color="#3a86b8"/><stop offset="0.4" stop-color="#bfe6fa"/><stop offset="1" stop-color="#2a6f9e"/></linearGradient>
<radialGradient id="gGlobe" cx="0.35" cy="0.3" r="0.7"><stop offset="0" stop-color="#d8f0ff"/><stop offset="0.5" stop-color="#3a7fc8"/><stop offset="1" stop-color="#1a3f78"/></radialGradient>
</defs>
<!-- tab 2 property manager -->
<rect x="66.5" y="217.5" width="27" height="25" rx="1.5" fill="url(#gW3)" stroke="#333" stroke-width="1"/>
<rect x="67" y="218" width="26" height="4" fill="#3a86b8"/>
<rect x="69.5" y="224.5" width="6.5" height="4" rx="1" fill="#4a9ad0" stroke="#1f4f78" stroke-width="0.6"/>
<rect x="69.5" y="230" width="6.5" height="4" rx="1" fill="#4a9ad0" stroke="#1f4f78" stroke-width="0.6"/>
<rect x="69.5" y="235.5" width="6.5" height="4" rx="1" fill="#4a9ad0" stroke="#1f4f78" stroke-width="0.6"/>
<path d="M78 226.5h13M78 232h13M78 237.5h13" stroke="#333" stroke-width="1"/>
<!-- tab 3 config -->
<rect x="121" y="216.5" width="3" height="27" fill="#f4f4f4" stroke="#444" stroke-width="0.8"/>
<path d="M124 222.5h4M124 237.5h4" stroke="#444" stroke-width="2.2"/>
<path d="M124 222.5h4M124 237.5h4" stroke="#f4f4f4" stroke-width="0.8"/>
<rect x="128.5" y="216.5" width="10" height="10" rx="1" fill="url(#gW3)" stroke="#444" stroke-width="0.9"/>
<rect x="131" y="218.5" width="9" height="9" rx="1" fill="url(#gW3)" stroke="#444" stroke-width="0.9"/>
<rect x="131.5" y="232" width="10" height="10" rx="1" fill="url(#gW3)" stroke="#444" stroke-width="0.9"/>
<rect x="134" y="234" width="10" height="10" rx="1" fill="url(#gW3)" stroke="#444" stroke-width="0.9"/>
<!-- tab 4 crosshair -->
<circle cx="183.8" cy="229.8" r="10.2" fill="none" stroke="#2a2a2a" stroke-width="2.2"/>
<path d="M169.5 229.8h28.6M183.8 215.5v28.6" stroke="#2a2a2a" stroke-width="2"/>
<!-- tab 5 globe -->
<circle cx="235.8" cy="228.8" r="12.8" fill="#2a6ab0"/>
<path d="M235.8 228.8 L223 229.5 A12.8 12.8 0 0 0 237 241.6Z" fill="#3a9a3a"/>
<path d="M235.8 228.8 L237 241.6 A12.8 12.8 0 0 0 248.6 230Z" fill="#d08a20"/>
<path d="M235.8 228.8 L240 216.6 A12.8 12.8 0 0 1 248.6 230Z" fill="#c01a1a"/>
<ellipse cx="242.5" cy="222.5" rx="4.5" ry="6.2" fill="#0a0a0a" transform="rotate(-25 242.5 222.5)"/>
<radialGradient id="gGl2" cx="0.3" cy="0.28" r="0.8"><stop offset="0" stop-color="#ffffff" stop-opacity="0.85"/><stop offset="0.3" stop-color="#ffffff" stop-opacity="0.15"/><stop offset="1" stop-color="#000" stop-opacity="0.35"/></radialGradient>
<circle cx="235.8" cy="228.8" r="12.8" fill="url(#gGl2)" stroke="#333" stroke-width="0.6"/>
<!-- tab 6 partial -->
<rect x="272" y="214.5" width="15" height="11" fill="#a8c8e0" stroke="#3a86b8" stroke-width="0.8"/>
<path d="M273 215 L283 225 L286 215" fill="none" stroke="#3a86b8" stroke-width="1.2"/>
<!-- arrows box -->
<rect x="242.5" y="226.5" width="45" height="22" fill="#f0f0f0" stroke="#d2d2d2" stroke-width="1"/>
<rect x="265.5" y="227" width="1" height="21" fill="#d2d2d2"/>
<path d="M251 237.5 L257 232 V243Z M281 237.5 L275 232 V243Z" fill="#111"/>
<!-- filter -->
<path d="M11.5 258 Q11.5 255 14 255 H34 Q36.5 255 36.5 258 V259.5 L26 271 V281 Q26 283 24 283 Q22 283 22 281 V271 L11.5 259.5Z" fill="url(#gW3)" stroke="#555" stroke-width="0.9"/>
<rect x="11.5" y="255" width="25" height="4.5" rx="2" fill="url(#gFun)" stroke="#1f4f78" stroke-width="0.8"/>
<path d="M24 262 L33 261 L25 270Z" fill="#bbb" opacity="0.6"/>
</svg>
<!--/PI-->
<div id="tree" style="position:absolute;left:0;top:0;width:262px;height:925px;overflow:hidden;clip-path:inset(287px 0 0 0)">
<div class="row" style="top:288px"><svg class="abs" style="left:4px;top:-2px" width="32" height="34" viewBox="0 0 32 34"><use href="#i-part"/></svg><span class="abs" style="left:39px;top:0px;transform:scaleX(0.968);transform-origin:0 0">Pièce5 (Défaut) &lt;&lt;Défaut&gt;_Etat d'affichage 1&gt;</span></div>
<div class="row" style="top:320px"><i class="exp"></i><svg class="ti" viewBox="0 0 28 26"><use href="#i-hist"/></svg><span class="tt" style="transform:scaleX(1.01)">Historique</span></div>
<div class="row" style="top:352px"><svg class="ti" viewBox="0 0 28 26"><use href="#i-capt"/></svg><span class="tt" style="transform:scaleX(0.96)">Capteurs</span></div>
<div class="row" style="top:384px"><i class="exp"></i><svg class="ti" viewBox="0 0 28 26"><use href="#i-annot"/></svg><span class="tt" style="transform:scaleX(1.015)">Annotations</span></div>
<div class="row" style="top:416px"><i class="exp"></i><svg class="ti" viewBox="0 0 28 26"><use href="#i-liste"/></svg><span class="tt" style="transform:scaleX(0.933)">Liste des pièces soudées</span></div>
<div class="row" style="top:448px"><i class="exp"></i><svg class="ti" viewBox="0 0 28 26"><use href="#i-equ"/></svg><span class="tt" style="transform:scaleX(0.968)">Equations</span></div>
<div class="row" style="top:480px"><svg class="ti" viewBox="0 0 28 26"><use href="#i-mat"/></svg><span class="tt" style="transform:scaleX(0.985)">Matériau &lt;non spécifié&gt;</span></div>
<div class="row" style="top:512px"><svg class="ti" viewBox="0 0 28 26"><use href="#i-plan"/></svg><span class="tt" style="transform:scaleX(0.946)">Plan de face</span></div>
<div class="row" style="top:544px"><svg class="ti" viewBox="0 0 28 26"><use href="#i-plan"/></svg><span class="tt" style="transform:scaleX(0.945)">Plan de dessus</span></div>
<div class="row" style="top:576px"><svg class="ti" viewBox="0 0 28 26"><use href="#i-plan"/></svg><span class="tt" style="transform:scaleX(0.987)">Plan de droite</span></div>
<div class="row" style="top:608px"><svg class="ti" viewBox="0 0 28 26"><use href="#i-orig"/></svg><span class="tt" style="transform:scaleX(1.016)">Origine</span></div>
<div class="row" style="top:640px"><i class="exp"></i><svg class="ti" viewBox="0 0 28 26"><use href="#i-tole"/></svg><span class="tt" style="transform:scaleX(0.949)">Tôlerie</span></div>
<div class="row" style="top:672px"><i class="exp"></i><svg class="ti" viewBox="0 0 28 26"><use href="#i-base"/></svg><span class="tt" style="transform:scaleX(0.951)">Tôle de base pliée1</span></div>
<div class="row" style="top:704px"><i class="exp"></i><svg class="ti" viewBox="0 0 28 26"><use href="#i-arete"/></svg><span class="tt" style="transform:scaleX(0.949)">Tôle pliée sur arête1</span></div>
<div class="row" style="top:736px"><svg class="ti" viewBox="0 0 28 26"><use href="#i-coin"/></svg><span class="tt" style="transform:scaleX(0.969)">Coin-brisé1</span></div>
<div class="row" style="top:768px"><i class="exp"></i><svg class="ti" viewBox="0 0 28 26"><use href="#i-arete"/></svg><span class="tt" style="transform:scaleX(0.954)">Tôle pliée sur arête2</span></div>
<div class="row" style="top:800px"><i class="exp"></i><svg class="ti" viewBox="0 0 28 26"><use href="#i-ecrase"/></svg><span class="tt" style="transform:scaleX(0.9)">Pli écrasé1</span></div>
<div class="row" style="top:832px"><i class="exp"></i><svg class="ti" viewBox="0 0 28 26"><use href="#i-enlev"/></svg><span class="tt" style="transform:scaleX(0.94)">Enlèv. mat.-Extru.1</span></div>
<div class="row" style="top:864px"><i class="exp"></i><svg class="ti" viewBox="0 0 28 26"><use href="#i-enlev"/></svg><span class="tt" style="transform:scaleX(0.948)">Enlèv. mat.-Extru.2</span></div>
<div style="position:absolute;left:36px;top:895px;width:108px;height:30px;background:#a9c9e6;border:1px solid #5b98cc;border-bottom:none"></div><div class="row" style="top:896px"><i class="exp"></i><svg class="ti" viewBox="0 0 28 26"><use href="#i-deplier"/></svg><span class="tt" style="transform:scaleX(0.965)">Déplier1</span></div>
</div>
<div id="vp"><svg class="abs" style="left:-290px;top:-177px" width="1142" height="928" viewBox="0 0 1142 928">
<g transform="matrix(1 -0.2745 0.3934 1 528.75 356.8)"><path d="M -1.5,-123.5 L 194,-123.5 A 38 38 0 0 1 232,-85.5 L 232,-5.5 L 189.5,-5.5 L 189.5,-0.8 L 464,-0.8 L 464,244.5 L 189.5,244.5 L 189.5,249.5 L 232,249.5 L 232,329 A 38 38 0 0 1 194,367 L -2.5,367 A 38 38 0 0 1 -40.5,329 L -40.5,249.5 L 3,249.5 L 3,244.5 L -271,244.5 L -271,-0.8 L 3,-0.8 L 3,-5.5 L -39.5,-5.5 L -39.5,-85.5 A 38 38 0 0 1 -1.5,-123.5 Z M 38.55,121.8 A 57.7 61 0 1 0 153.95,121.8 A 57.7 61 0 1 0 38.55,121.8 Z M -223.5,122.3 A 15.5 16.4 0 1 0 -192.5,122.3 A 15.5 16.4 0 1 0 -223.5,122.3 Z M 385.5,121.9 A 15.5 16.4 0 1 0 416.5,121.9 A 15.5 16.4 0 1 0 385.5,121.9 Z" fill="#6a0000" fill-rule="evenodd" stroke="#000" stroke-width="1" vector-effect="non-scaling-stroke"/></g>
<g transform="matrix(1 -0.2745 0.3934 1 531.7 353.4)"><path d="M -38.5,-2.1 L 2,-2.1 M 190.5,-2.1 L 231,-2.1 M -39.5,248.3 L 2,248.3 M 190.5,248.3 L 231,248.3" stroke="#e8e8e8" stroke-width="1.1" vector-effect="non-scaling-stroke"/><path d="M -1.5,-123.5 L 194,-123.5 A 38 38 0 0 1 232,-85.5 L 232,-5.5 L 189.5,-5.5 L 189.5,-0.8 L 464,-0.8 L 464,244.5 L 189.5,244.5 L 189.5,249.5 L 232,249.5 L 232,329 A 38 38 0 0 1 194,367 L -2.5,367 A 38 38 0 0 1 -40.5,329 L -40.5,249.5 L 3,249.5 L 3,244.5 L -271,244.5 L -271,-0.8 L 3,-0.8 L 3,-5.5 L -39.5,-5.5 L -39.5,-85.5 A 38 38 0 0 1 -1.5,-123.5 Z M 38.55,121.8 A 57.7 61 0 1 0 153.95,121.8 A 57.7 61 0 1 0 38.55,121.8 Z M -223.5,122.3 A 15.5 16.4 0 1 0 -192.5,122.3 A 15.5 16.4 0 1 0 -223.5,122.3 Z M 385.5,121.9 A 15.5 16.4 0 1 0 416.5,121.9 A 15.5 16.4 0 1 0 385.5,121.9 Z" fill="#b00000" fill-rule="evenodd" stroke="#000" stroke-width="1.2" vector-effect="non-scaling-stroke"/>
<path d="M -258.7,-0.8 L -258.7,244.5 M -235,-0.8 L -235,244.5 M -177,-0.8 L -177,244.5 M -146.7,-0.8 L -146.7,244.5 M -54.3,-0.8 L -54.3,244.5 M 0,-0.8 L 0,244.5 M 192.5,-0.8 L 192.5,244.5 M 248,-0.8 L 248,244.5 M 340.5,-0.8 L 340.5,244.5 M 370.3,-0.8 L 370.3,244.5 M 427.8,-0.8 L 427.8,244.5 M 453,-0.8 L 453,244.5" stroke="#000" stroke-width="1.3" vector-effect="non-scaling-stroke"/></g>
</svg><!--VD--><svg class="abs" style="left:-290px;top:-177px" width="1142" height="928" viewBox="0 0 1142 928">
<defs>
<linearGradient id="gH" x1="0" y1="0" x2="1" y2="1"><stop offset="0" stop-color="#9fd6f2"/><stop offset="1" stop-color="#2a73a8"/></linearGradient>
<radialGradient id="gLens" cx="0.4" cy="0.35" r="0.7"><stop offset="0" stop-color="#ffffff"/><stop offset="1" stop-color="#c8d4dc"/></radialGradient>
<linearGradient id="gW4" x1="0" y1="0" x2="1" y2="0"><stop offset="0" stop-color="#bdbdbd"/><stop offset="0.5" stop-color="#f8f8f8"/><stop offset="1" stop-color="#b8b8b8"/></linearGradient>
<pattern id="hatch" width="3" height="3" patternUnits="userSpaceOnUse" patternTransform="rotate(45)"><rect width="3" height="3" fill="#5aaad8"/><rect width="1" height="3" fill="#2a6f9e"/></pattern>
</defs>
<!-- zoom to fit -->
<path d="M884 210 L891.5 202.5" stroke="#2a73a8" stroke-width="4.2" stroke-linecap="round"/>
<path d="M884 210 L891.5 202.5" stroke="#8cc8ea" stroke-width="1.6" stroke-linecap="round"/>
<circle cx="898.3" cy="194.3" r="8.6" fill="url(#gLens)" stroke="#666" stroke-width="1.6"/>
<path d="M898.3 188 l-2.2 2.6h4.4Z M898.3 200.6 l-2.2 -2.6h4.4Z M892 194.3 l2.6 -2.2v4.4Z M904.6 194.3 l-2.6 -2.2v4.4Z" fill="#555"/>
<!-- zoom area -->
<rect x="929.5" y="184.5" width="17" height="17" fill="none" stroke="#555" stroke-width="1" stroke-dasharray="2 1.5"/>
<path d="M920.5 210 L928 202.5" stroke="#2a73a8" stroke-width="4.2" stroke-linecap="round"/>
<path d="M920.5 210 L928 202.5" stroke="#8cc8ea" stroke-width="1.6" stroke-linecap="round"/>
<circle cx="934.5" cy="195.8" r="8.4" fill="url(#gLens)" stroke="#666" stroke-width="1.6"/>
<!-- previous view telescope -->
<path d="M958 203 L977 188 L983 187 L985 192 L967 209 Q961 212 958.5 208 Z" fill="url(#gW4)" stroke="#666" stroke-width="1"/>
<ellipse cx="962" cy="206.5" rx="4" ry="5" fill="#ddd" stroke="#666" stroke-width="1" transform="rotate(-40 962 206.5)"/>
<path d="M969 201 L975 196 V199 H984.5 V204 H975 V207Z" fill="#3a8ec4" stroke="#1f5f8a" stroke-width="0.6"/>
<!-- section view -->
<path d="M995.5 190 Q1008.5 182 1022 190 V207 Q1008.5 214 995.5 207Z" fill="#dedede" stroke="#555" stroke-width="1"/>
<path d="M1002.5 190 Q1008.5 187 1014.5 190 V208 Q1008.5 210 1002.5 208Z" fill="url(#gW4)" stroke="#666" stroke-width="0.8"/>
<path d="M995.5 191 L1002.5 193 V209.5 L995.5 207Z" fill="url(#hatch)" stroke="#1f5f8a" stroke-width="0.8"/>
<path d="M1014.5 193 L1022 191 V207 L1014.5 209.5Z" fill="url(#hatch)" stroke="#1f5f8a" stroke-width="0.8"/>
<!-- view orientation -->
<path d="M1033.5 194.5 L1041 184.5 H1060.5 V203 L1053 211 H1033.5Z" fill="#cdd1da" stroke="#444" stroke-width="0.9"/><path d="M1041 184.5 V193 M1041 193 H1060.5 M1041 193 L1033.5 203" fill="none" stroke="#8a8a8a" stroke-width="0.6"/>
<rect x="1033.5" y="194.5" width="19.5" height="16.5" fill="url(#gH)" stroke="#333" stroke-width="0.9"/>
<path d="M1053 194.5 L1060.5 184.5" stroke="#444" stroke-width="0.8"/>
<path d="M1047 186 V192 M1044.8 189.5 L1047 192.5 L1049.2 189.5 M1059 203 H1053.5 M1056 200.8 L1053.5 203 L1056 205.2" fill="none" stroke="#111" stroke-width="1.2"/>
<path d="M1068.8 196 H1076 L1072.4 200Z" fill="#8a8a8a"/>
<!-- display style -->
<path d="M1088.5 191 L1100 185 L1111.5 189.5 V205 L1100 211 L1088.5 206Z" fill="#6ab4de" stroke="#555" stroke-width="0.9"/>
<path d="M1100 196 L1111.5 190 V205 L1100 211Z" fill="#f2f2f2" stroke="#555" stroke-width="0.8"/>
<path d="M1088.5 191 L1100 196 L1111.5 190 M1100 196 V211" fill="none" stroke="#555" stroke-width="0.8"/>
<path d="M1092 192 L1100 188 L1105 190 L1097 194Z" fill="#cfe8f5"/>
<path d="M1103 193 L1107 191 V208 L1103 210Z" fill="#8fcaea"/>
<path d="M1122 196 H1129 L1125.5 200Z" fill="#8a8a8a"/>
<path d="M1142 193 Q1136 193 1136 199 Q1136 205 1142 205" fill="none" stroke="#888" stroke-width="1.6"/>
<!-- triad -->
<path d="M352 877 L339.5 846" stroke="#1a1a1a" stroke-width="4.4"/>
<path d="M352 877 L339.5 846" stroke="#2e9a3a" stroke-width="2.8"/>
<path d="M334 849 L337 835 L346 844.5Z" fill="#2a7a2a" stroke="#1a1a1a" stroke-width="1"/>
<path d="M350 877 L358 870" stroke="#111a50" stroke-width="5"/>
<path d="M350 877 L358 870" stroke="#1a3a9a" stroke-width="3.5"/>
<circle cx="362" cy="867" r="5.6" fill="#1a3ac0"/>
<path d="M354 877 L381 868.5" stroke="#7a0000" stroke-width="4.2"/>
<path d="M354 877 L381 868.5" stroke="#e02a2a" stroke-width="2.6"/>
<path d="M376 863.5 L390.5 866.8 L379 876Z" fill="#a01010" stroke="#600" stroke-width="0.8"/>
<path d="M329.5 822 L333.5 827 L337.5 822 M333.5 827 V834.5" fill="none" stroke="#2a9a2a" stroke-width="0.9"/>
<path d="M365 852 H371.5 L366.5 862.5 M367 864.5 H371.5" fill="none" stroke="#2020ff" stroke-width="0.9"/>
<path d="M389.5 858.5 L398.5 871 M398.5 858.5 L389.5 871" fill="none" stroke="#ff2020" stroke-width="0.9"/>
<!-- watermark -->
<text x="501" y="905" font-family="Liberation Sans" font-weight="bold" font-size="31" fill="#c9cbd1" stroke="#c0c3ca" stroke-width="1.2" textLength="136" lengthAdjust="spacingAndGlyphs">خمسات</text>
</svg>
<!--/VD--></div>
<svg class="abs" style="left:280px;top:515px" width="30" height="70" viewBox="280 515 30 70">
<defs><radialGradient id="gHnd" cx="0.4" cy="0.35" r="0.7"><stop offset="0" stop-color="#f4f4f4"/><stop offset="1" stop-color="#b4b4b4"/></radialGradient></defs>
<path d="M289 520.5 H302.5 V578.2 H289" fill="#f7f7f7" stroke="#9a9a9a" stroke-width="1"/><rect x="286" y="521" width="4" height="56.7" fill="#f7f7f7"/>
<rect x="281" y="521" width="6" height="56.7" fill="#efefef"/>
<rect x="287" y="521" width="2" height="56.7" fill="#f8f8f8"/>
<circle cx="295" cy="548.8" r="4.6" fill="url(#gHnd)" stroke="#a0a0a0" stroke-width="0.8"/>
</svg>
</body></html>
